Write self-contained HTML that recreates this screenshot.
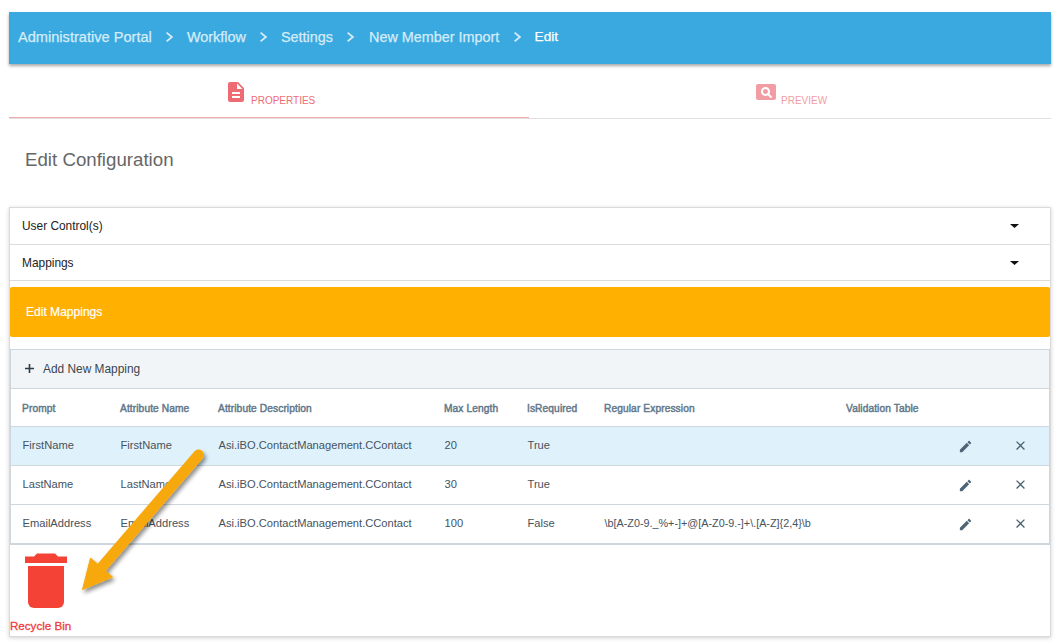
<!DOCTYPE html>
<html>
<head>
<meta charset="utf-8">
<style>
html,body{margin:0;padding:0;background:#fff;}
body{width:1056px;height:642px;overflow:hidden;position:relative;font-family:"Liberation Sans",sans-serif;}
.abs{position:absolute;white-space:nowrap;}
#hdr{left:9px;top:12px;width:1042px;height:52px;background:#3aa9e0;box-shadow:0 2px 3px rgba(0,0,0,.35);}
.bc{position:absolute;top:14.5px;font-size:14.4px;line-height:20px;color:#d5ecf8;-webkit-text-stroke:0.25px currentColor;}
.chev{position:absolute;}
#tabline{left:9px;top:118px;width:1042px;height:1px;background:#e0e0e0;}
#tabact{left:9px;top:117px;width:520px;height:1px;background:#f4aab0;}
.tab{font-size:10px;line-height:12px;}
#panel{left:9px;top:207px;width:1040px;height:428px;border:1px solid #dadada;box-shadow:0 1px 4px rgba(0,0,0,.18);}
.row{position:absolute;left:0;width:1040px;border-bottom:1px solid #dcdcdc;}
.lbl{position:absolute;left:12px;font-size:12px;color:#222;}
#orange{left:10px;top:287px;width:1040px;height:50px;background:#ffb000;border-radius:2px;}
#tool{left:10px;top:349px;width:1039px;height:38px;background:#f2f5f7;border-top:1px solid #cdd7dd;border-bottom:1px solid #cdd7dd;}
.th{position:absolute;top:402.5px;font-size:10.2px;font-weight:normal;-webkit-text-stroke:0.45px #62788a;color:#62788a;letter-spacing:0.1px;line-height:12px;}
.td{position:absolute;margin-top:1px;margin-left:0.5px;font-size:11.15px;color:#47525c;line-height:13px;}
.rowline{position:absolute;left:10px;width:1039px;height:1px;background:#cdd7dd;}
</style>
</head>
<body>
<div id="hdr" class="abs">
  <div class="bc" style="left:9px;font-size:14.6px">Administrative Portal</div>
  <svg class="chev" style="left:156px;top:19px" width="9" height="12" viewBox="0 0 9 12"><path d="M1.6 1.6L6.9 6 1.6 10.4" fill="none" stroke="#d5ecf8" stroke-width="1.8"/></svg>
  <div class="bc" style="left:178px">Workflow</div>
  <svg class="chev" style="left:250px;top:19px" width="9" height="12" viewBox="0 0 9 12"><path d="M1.6 1.6L6.9 6 1.6 10.4" fill="none" stroke="#d5ecf8" stroke-width="1.8"/></svg>
  <div class="bc" style="left:272px">Settings</div>
  <svg class="chev" style="left:337px;top:19px" width="9" height="12" viewBox="0 0 9 12"><path d="M1.6 1.6L6.9 6 1.6 10.4" fill="none" stroke="#d5ecf8" stroke-width="1.8"/></svg>
  <div class="bc" style="left:360px">New Member Import</div>
  <svg class="chev" style="left:503.5px;top:19px" width="9" height="12" viewBox="0 0 9 12"><path d="M1.6 1.6L6.9 6 1.6 10.4" fill="none" stroke="#d5ecf8" stroke-width="1.8"/></svg>
  <div class="bc" style="left:525.5px;color:#fff;font-size:13.7px;top:15px">Edit</div>
</div>

<div id="tabline" class="abs"></div>
<div id="tabact" class="abs"></div>

<!-- properties icon -->
<svg class="abs" style="left:228px;top:82px" width="16" height="20" viewBox="4 2 16 20">
  <path d="M14 2H6c-1.1 0-1.99.9-1.99 2L4 20c0 1.1.89 2 1.99 2H18c1.1 0 2-.9 2-2V8l-6-6zm2 16H8v-2h8v2zm0-4H8v-2h8v2zm-3-5V3.5L18.5 9H13z" fill="#ee6b73"/>
</svg>
<div class="abs tab" style="left:251px;top:95px;color:#ed6d76">PROPERTIES</div>

<!-- preview icon -->
<svg class="abs" style="left:756px;top:84px" width="20" height="16" viewBox="2 4 20 16">
  <path d="M11.5 9C10.12 9 9 10.12 9 11.5s1.12 2.5 2.5 2.5 2.5-1.12 2.5-2.5S12.88 9 11.5 9zM20 4H4c-1.1 0-2 .9-2 2v12c0 1.1.9 2 2 2h16c1.1 0 2-.9 2-2V6c0-1.1-.9-2-2-2zm-3.210 14.21l-2.91-2.91c-.69.44-1.51.7-2.39.7C9.01 16 7 13.99 7 11.5S9.010 7 11.5 7 16 9.01 16 11.5c0 .88-.26 1.69-.7 2.39l2.91 2.9-1.42 1.42z" fill="#f29da3"/>
</svg>
<div class="abs tab" style="left:781px;top:95px;color:#f29da3">PREVIEW</div>

<div class="abs" style="left:25px;top:148.5px;font-size:18.7px;color:#666;line-height:22px">Edit Configuration</div>

<div id="panel" class="abs">
  <div class="row" style="top:0;height:36px"></div>
  <div class="row" style="top:37px;height:35px"></div>
</div>
<div class="abs" style="left:22px;top:219px;font-size:11.9px;color:#222;line-height:14px">User Control(s)</div>
<div class="abs" style="left:22px;top:256px;font-size:11.9px;color:#222;line-height:14px">Mappings</div>
<svg class="abs" style="left:1009.5px;top:224px" width="9" height="4" viewBox="0 0 9 4"><path d="M0 0H9L4.5 4z" fill="#111"/></svg>
<svg class="abs" style="left:1009.5px;top:261px" width="9" height="4" viewBox="0 0 9 4"><path d="M0 0H9L4.5 4z" fill="#111"/></svg>

<div id="orange" class="abs"></div>
<div class="abs" style="left:26px;top:305.3px;font-size:12.05px;color:#fff;-webkit-text-stroke:0.2px #fff;line-height:14px">Edit Mappings</div>

<div id="tool" class="abs"></div>
<svg class="abs" style="left:25px;top:364px" width="9" height="9" viewBox="0 0 9 9"><path d="M0 4.5H9M4.5 0V9" stroke="#2f3b45" stroke-width="1.6"/></svg>
<div class="abs" style="left:43px;top:362px;font-size:11.9px;color:#3a4650;line-height:14px">Add New Mapping</div>

<div class="th" style="left:22px">Prompt</div>
<div class="th" style="left:120px">Attribute Name</div>
<div class="th" style="left:218px">Attribute Description</div>
<div class="th" style="left:444px">Max Length</div>
<div class="th" style="left:527px">IsRequired</div>
<div class="th" style="left:604px">Regular Expression</div>
<div class="th" style="left:846px">Validation Table</div>

<div class="rowline" style="top:426px"></div>
<div class="abs" style="left:10px;top:427px;width:1039px;height:38px;background:#dff2fc"></div>
<div class="rowline" style="top:465px"></div>
<div class="rowline" style="top:504px"></div>
<div class="rowline" style="top:543px;height:2px;width:1040px"></div>
<div class="abs" style="left:10px;top:349px;width:1px;height:195px;background:#cdd7dd"></div>
<div class="abs" style="left:1049px;top:349px;width:1px;height:195px;background:#cdd7dd"></div>

<div class="td" style="left:22px;top:438px">FirstName</div>
<div class="td" style="left:120px;top:438px">FirstName</div>
<div class="td" style="left:218px;top:438px">Asi.iBO.ContactManagement.CContact</div>
<div class="td" style="left:444px;top:438px">20</div>
<div class="td" style="left:527px;top:438px">True</div>

<div class="td" style="left:22px;top:477px">LastName</div>
<div class="td" style="left:120px;top:477px">LastName</div>
<div class="td" style="left:218px;top:477px">Asi.iBO.ContactManagement.CContact</div>
<div class="td" style="left:444px;top:477px">30</div>
<div class="td" style="left:527px;top:477px">True</div>

<div class="td" style="left:22px;top:516px">EmailAddress</div>
<div class="td" style="left:120px;top:516px">EmailAddress</div>
<div class="td" style="left:218px;top:516px">Asi.iBO.ContactManagement.CContact</div>
<div class="td" style="left:444px;top:516px">100</div>
<div class="td" style="left:527px;top:516px">False</div>
<div class="td" style="left:604px;top:516px;font-size:10.8px">\b[A-Z0-9._%+-]+@[A-Z0-9.-]+\.[A-Z]{2,4}\b</div>

<!-- edit / delete icons -->
<svg class="abs" style="left:958.1px;top:438.9px" width="15" height="15" viewBox="0 0 24 24"><path d="M3 17.25V21h3.75L17.81 9.94l-3.75-3.75L3 17.25zM20.71 7.04c.39-.39.39-1.02 0-1.41l-2.34-2.34c-.39-.39-1.02-.39-1.41 0l-1.83 1.83 3.750 3.75 1.83-1.83z" fill="#4f6575"/></svg>
<svg class="abs" style="left:1013.3px;top:438.4px" width="15" height="15" viewBox="0 0 24 24"><path d="M19 6.41L17.59 5 12 10.59 6.41 5 5 6.41 10.59 12 5 17.59 6.41 19 12 13.41 17.59 19 19 17.59 13.41 12z" fill="#47606f"/></svg>
<svg class="abs" style="left:958.1px;top:477.9px" width="15" height="15" viewBox="0 0 24 24"><path d="M3 17.25V21h3.75L17.81 9.94l-3.75-3.75L3 17.25zM20.71 7.04c.39-.39.39-1.02 0-1.41l-2.34-2.34c-.39-.39-1.02-.39-1.41 0l-1.83 1.83 3.750 3.75 1.83-1.83z" fill="#4f6575"/></svg>
<svg class="abs" style="left:1013.3px;top:477.4px" width="15" height="15" viewBox="0 0 24 24"><path d="M19 6.41L17.59 5 12 10.59 6.41 5 5 6.41 10.59 12 5 17.59 6.41 19 12 13.41 17.59 19 19 17.59 13.41 12z" fill="#47606f"/></svg>
<svg class="abs" style="left:958.1px;top:516.9px" width="15" height="15" viewBox="0 0 24 24"><path d="M3 17.25V21h3.75L17.81 9.94l-3.75-3.75L3 17.25zM20.71 7.04c.39-.39.39-1.02 0-1.41l-2.34-2.34c-.39-.39-1.02-.39-1.41 0l-1.83 1.83 3.750 3.75 1.83-1.83z" fill="#4f6575"/></svg>
<svg class="abs" style="left:1013.3px;top:516.4px" width="15" height="15" viewBox="0 0 24 24"><path d="M19 6.41L17.59 5 12 10.59 6.41 5 5 6.41 10.59 12 5 17.59 6.41 19 12 13.41 17.59 19 19 17.59 13.41 12z" fill="#47606f"/></svg>

<!-- recycle bin -->
<svg class="abs" style="left:24px;top:553px" width="44" height="56" viewBox="0 0 44 56">
  <path d="M13 0.5H31L34 3.5H43V10H1V3.5H10z" fill="#f44336"/>
  <path d="M4 13H40V49a6 6 0 0 1-6 6H10a6 6 0 0 1-6-6z" fill="#f44336"/>
</svg>
<div class="abs" style="left:10px;top:619px;font-size:11.6px;font-weight:normal;-webkit-text-stroke:0.3px #f03a3e;color:#f03a3e;line-height:13px">Recycle Bin</div>

<!-- arrow -->
<svg class="abs" style="left:0;top:0" width="1056" height="642" viewBox="0 0 1056 642">
  <defs>
    <filter id="sh" x="-20%" y="-20%" width="140%" height="140%">
      <feGaussianBlur in="SourceAlpha" stdDeviation="2"/>
      <feOffset dx="2" dy="3"/>
      <feComponentTransfer><feFuncA type="linear" slope="0.45"/></feComponentTransfer>
      <feMerge><feMergeNode/><feMergeNode in="SourceGraphic"/></feMerge>
    </filter>
  </defs>
  <g filter="url(#sh)">
    <path d="M198.5 455L102 567" stroke="#f7a80f" stroke-width="11" stroke-linecap="round" fill="none"/>
    <path d="M82.5 589.5L90.5 558L112.5 577z" fill="#f7a80f" stroke="#f7a80f" stroke-width="1" stroke-linejoin="round"/>
  </g>
</svg>
</body>
</html>
